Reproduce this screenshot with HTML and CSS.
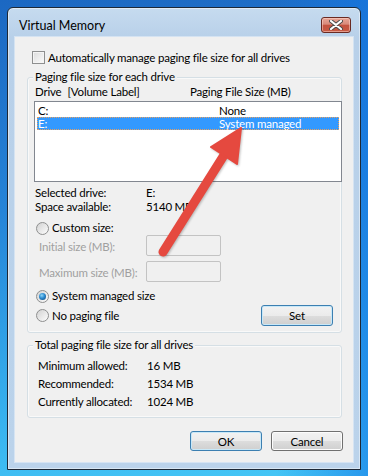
FILE: index.html
```html
<!DOCTYPE html>
<html lang="en">
	<head>
		<meta charset="UTF-8" />
		<title>Virtual Memory</title>
		<link rel="stylesheet" href="styles.css">
	</head>
	<body>
		<div class="window">
			<div class="titlebar">
				<span class="title">Virtual Memory</span>
				<button class="close-btn" aria-label="Close">
					<svg width="14" height="10" viewBox="0 0 14 10">
						<path d="M2 1 L12 9 M12 1 L2 9" stroke="#4a4a4a" stroke-width="4" stroke-linecap="round" />
						<path d="M2 1 L12 9 M12 1 L2 9" stroke="#ffffff" stroke-width="2.2" stroke-linecap="round" />
					</svg>
				</button>
			</div>

			<div class="client">
				<label class="check-row">
					<span class="checkbox"></span>
					<span>Automatically manage paging file size for all drives</span>
				</label>

				<div class="group group-drives">
					<span class="group-title">Paging file size for each drive</span>

					<div class="list-head">
						<span class="col-drive">Drive<span class="vol">[Volume Label]</span></span>
						<span>Paging File Size (MB)</span>
					</div>

					<div class="listbox">
						<div class="list-row">
							<span class="col-name">C:</span>
							<span>None</span>
						</div>
						<div class="list-row selected">
							<span class="col-name">E:</span>
							<span>System managed</span>
						</div>
					</div>

					<div class="info-row">
						<span class="info-label">Selected drive:</span>
						<span>E:</span>
					</div>
					<div class="info-row">
						<span class="info-label">Space available:</span>
						<span>5140 MB</span>
					</div>

					<label class="radio-row custom-row">
						<span class="radio"></span>
						<span>Custom size:</span>
					</label>

					<div class="field-row">
						<span class="field-label">Initial size (MB):</span>
						<span class="textbox"></span>
					</div>
					<div class="field-row max-row">
						<span class="field-label">Maximum size (MB):</span>
						<span class="textbox"></span>
					</div>

					<label class="radio-row system-row">
						<span class="radio checked"></span>
						<span>System managed size</span>
					</label>

					<div class="last-row">
						<label class="radio-row">
							<span class="radio"></span>
							<span>No paging file</span>
						</label>
						<button class="btn btn-default set-btn">Set</button>
					</div>
				</div>

				<div class="group group-total">
					<span class="group-title">Total paging file size for all drives</span>

					<div class="total-row">
						<span class="total-label">Minimum allowed:</span>
						<span>16 MB</span>
					</div>
					<div class="total-row">
						<span class="total-label">Recommended:</span>
						<span>1534 MB</span>
					</div>
					<div class="total-row">
						<span class="total-label">Currently allocated:</span>
						<span>1024 MB</span>
					</div>
				</div>

				<div class="actions">
					<button class="btn btn-default">OK</button>
					<button class="btn">Cancel</button>
				</div>
			</div>
		</div>

		<!-- annotation arrow drawn over the dialog -->
		<svg class="arrow" width="368" height="476" viewBox="0 0 368 476">
			<g class="arrow-shape">
				<line x1="163" y1="252" x2="226" y2="152" stroke="#e5493f" stroke-width="9" stroke-linecap="round" />
				<polygon points="241,128 211,147 237,164" fill="#e5493f" stroke="#e5493f" stroke-width="2" stroke-linejoin="round" />
			</g>
		</svg>
	</body>
</html>
```

FILE: styles.css
```css
* {
	margin: 0;
	padding: 0;
	box-sizing: border-box;
}

body {
	position: relative;
	width: 368px;
	height: 476px;
	overflow: hidden;
	font-family: 'Lato', 'Liberation Sans', sans-serif;
	font-size: 11.5px;
	letter-spacing: -0.2px;
	color: #000;
	white-space: nowrap;
	background:
		linear-gradient(
			to right,
			rgba(20, 110, 225, 0) 75%,
			rgba(20, 120, 230, 0.6) 100%
		),
		linear-gradient(
			172deg,
			#1c68c2 0%,
			#2584d8 40%,
			#36b0ee 78%,
			#46c8f6 100%
		);
}

button {
	font: inherit;
	color: inherit;
	letter-spacing: inherit;
}

.window {
	width: 354px;
	height: 463px;
	margin: 7px 0 0 7px;
	padding: 0 7px 7px;
	border: 1px solid #1d2836;
	border-radius: 6px 6px 0 0;
	background: linear-gradient(
		to bottom,
		#c6dbef 0%,
		#b8d0e9 30px,
		#bbd3eb 100%
	);
	box-shadow: inset 0 0 0 1px rgba(255, 255, 255, 0.45);
}

.titlebar {
	height: 29px;
	display: flex;
	justify-content: space-between;
	align-items: flex-start;
	padding: 9px 2px 0 4px;
}

.title {
	margin-top: 1px;
	line-height: 16px;
	font-size: 12.5px;
	letter-spacing: 0;
}

.close-btn {
	width: 30px;
	height: 16px;
	display: flex;
	align-items: center;
	justify-content: center;
	border: 1px solid #6a2a22;
	border-radius: 3px;
	background: linear-gradient(
		to bottom,
		#e8a597 0%,
		#d88a7a 45%,
		#c4523f 50%,
		#c75a44 100%
	);
	box-shadow: inset 0 0 0 1px rgba(255, 220, 210, 0.5);
}

.client {
	height: 425px;
	background: #f0f0f0;
	box-shadow: 0 0 0 1px rgba(255, 255, 255, 0.4);
	padding-top: 14px;
}

.check-row {
	height: 13px;
	display: flex;
	align-items: center;
	gap: 3px;
	padding-left: 17px;
	line-height: 13px;
}

.checkbox {
	width: 13px;
	height: 13px;
	border: 1px solid #8e8f8f;
	background: linear-gradient(135deg, #dcdcdc, #fbfbfb);
	box-shadow: inset 0 0 0 1px #f4f4f4;
}

.group {
	margin-left: 12px;
	width: 315px;
	border: 1px solid #d5dfe5;
	border-radius: 3px;
	box-shadow: inset 0 0 0 1px rgba(255, 255, 255, 0.6);
}

.group-title {
	display: block;
	width: max-content;
	height: 14px;
	margin: -8px 0 0 5px;
	padding: 0 2px;
	line-height: 14px;
	background: #f0f0f0;
}

.group-drives {
	margin-top: 13px;
	height: 256px;
}

.list-head {
	display: flex;
	padding-left: 7px;
	line-height: 14px;
	margin-top: 1px;
	height: 16px;
}

.col-drive {
	width: 155px;
}

.vol {
	margin-left: 6px;
}

.listbox {
	margin-left: 6px;
	width: 308px;
	height: 81px;
	padding: 2px;
	border: 1px solid #828790;
	background: #fff;
}

.list-row {
	display: flex;
	height: 13px;
	line-height: 13px;
	padding-left: 1px;
}

.list-row.selected {
	background: #3399ff;
	color: #fff;
	outline: 1px dotted #e8a060;
	outline-offset: -1px;
}

.col-name {
	width: 181px;
}

.info-row {
	display: flex;
	height: 14px;
	padding-left: 7px;
	line-height: 14px;
}

.listbox + .info-row {
	margin-top: 4px;
}

.info-label {
	width: 111px;
}

.radio-row {
	display: flex;
	align-items: center;
	gap: 3px;
	height: 14px;
	line-height: 14px;
}

.custom-row,
.system-row {
	margin-top: 7px;
	padding-left: 8px;
}

.radio {
	width: 13px;
	height: 13px;
	border: 1px solid #8e8f8f;
	border-radius: 50%;
	background: linear-gradient(135deg, #d2d2d2, #fdfdfd);
	display: flex;
	align-items: center;
	justify-content: center;
}

.radio.checked::after {
	content: '';
	width: 7px;
	height: 7px;
	border-radius: 50%;
	background: radial-gradient(
		circle at 40% 35%,
		#8fd6f6 0%,
		#2a8ad0 45%,
		#10406e 100%
	);
}

.field-row {
	display: flex;
	align-items: center;
	height: 21px;
	padding-left: 11px;
	color: #a0a0a0;
}

.max-row {
	margin-top: 5px;
}

.field-label {
	width: 107px;
	padding-top: 2px;
}

.textbox {
	width: 75px;
	height: 21px;
	border: 1px solid #c3c3c3;
	border-radius: 2px;
	background: #f0f0f0;
}

.last-row {
	display: flex;
	justify-content: space-between;
	align-items: center;
	height: 21px;
	margin-top: 2px;
	padding: 0 8px 0 8px;
}

.btn {
	width: 72px;
	height: 21px;
	border: 1px solid #707070;
	border-radius: 3px;
	background: linear-gradient(
		to bottom,
		#f2f2f2 0%,
		#ebebeb 50%,
		#dddddd 51%,
		#cfcfcf 100%
	);
	box-shadow: inset 0 0 0 1px #fcfcfc;
}

.btn-default {
	border-color: #3c7fb1;
	box-shadow: inset 0 0 0 1px #c8e8f8;
}

.group-total {
	margin-top: 12px;
	height: 73px;
}

.total-row {
	display: flex;
	height: 18px;
	line-height: 18px;
	padding-left: 10px;
}

.group-total .group-title + .total-row {
	margin-top: 5px;
}

.total-label {
	width: 109px;
}

.actions {
	display: flex;
	justify-content: flex-end;
	gap: 9px;
	margin-top: 13px;
	padding-right: 10px;
}

.actions .btn {
	height: 20px;
}

.arrow {
	position: absolute;
	top: 0;
	left: 0;
	pointer-events: none;
}

.arrow-shape {
	filter: drop-shadow(1px 1px 1px rgba(0, 0, 0, 0.25));
}
```
